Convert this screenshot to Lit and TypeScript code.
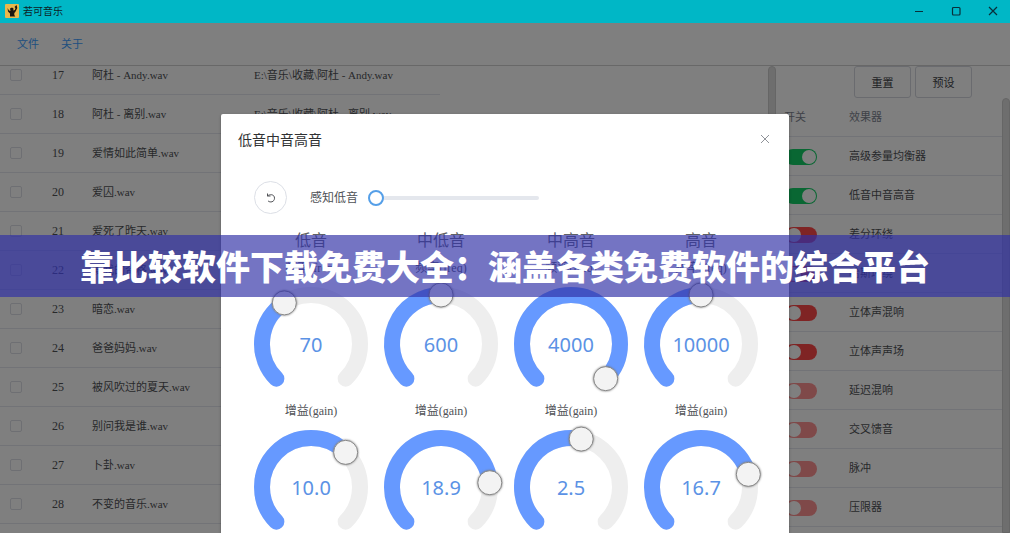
import { LitElement, html, svg, css } from "lit";
import { customElement, property } from "lit/decorators.js";

const PATH_ROOT = "E:\\音乐\\收藏\\";

const songs: { no: number; name: string }[] = [
  { no: 17, name: "阿杜 - Andy.wav" },
  { no: 18, name: "阿杜 - 离别.wav" },
  { no: 19, name: "爱情如此简单.wav" },
  { no: 20, name: "爱囚.wav" },
  { no: 21, name: "爱死了昨天.wav" },
  { no: 22, name: "爱我的资格.wav" },
  { no: 23, name: "暗恋.wav" },
  { no: 24, name: "爸爸妈妈.wav" },
  { no: 25, name: "被风吹过的夏天.wav" },
  { no: 26, name: "别问我是谁.wav" },
  { no: 27, name: "卜卦.wav" },
  { no: 28, name: "不变的音乐.wav" },
];

const effects: { name: string; state: string }[] = [
  { name: "高级参量均衡器", state: "on" },
  { name: "低音中音高音", state: "on" },
  { name: "差分环绕", state: "off" },
  { name: "哈斯环绕", state: "off" },
  { name: "立体声混响", state: "off" },
  { name: "立体声声场", state: "off" },
  { name: "延迟混响", state: "locked" },
  { name: "交叉馈音", state: "locked" },
  { name: "脉冲", state: "locked" },
  { name: "压限器", state: "locked" },
];

const bands = [
  { title: "低音", freq: "70", freqAt: 102, gain: "10.0", gainAt: 180 },
  { title: "中低音", freq: "600", freqAt: 135, gain: "18.9", gainAt: 220 },
  { title: "中高音", freq: "4000", freqAt: 270, gain: "2.5", gainAt: 147 },
  { title: "高音", freq: "10000", freqAt: 135, gain: "16.7", gainAt: 210 },
];

@customElement("round-knob")
export class RoundKnob extends LitElement {
  @property() value = "";
  @property() label = "";
  @property({ type: Number }) angle = 0;

  static styles = css`
    :host { display: block; }
    .knob { display: block; overflow: visible; }
    .track { fill: none; stroke: #eee; stroke-width: 16; stroke-linecap: round; }
    .fill { fill: none; stroke: #69f; stroke-width: 16; stroke-linecap: round; }
    .handle { fill: #f3f3f3; stroke: #888; stroke-width: 1; filter: drop-shadow(0 0 1px #777); }
    .value { fill: #5b92e5; font: 20px "Noto Sans", sans-serif; text-anchor: middle; }
  `;

  private point(deg: number) {
    const a = ((135 + deg) * Math.PI) / 180;
    return [57 + 49 * Math.cos(a), 57 + 49 * Math.sin(a)];
  }

  private arc(deg: number) {
    const [x0, y0] = this.point(0);
    const [x1, y1] = this.point(deg);
    return `M${x0} ${y0}A49 49 0 ${deg > 180 ? 1 : 0} 1 ${x1} ${y1}`;
  }

  render() {
    const [x, y] = this.point(this.angle);
    return html`<svg class="knob" width="114" height="104" role="slider" aria-label=${this.label} aria-valuenow=${this.value}>
      ${svg`<path class="track" d=${this.arc(270)}></path>
      <path class="fill" d=${this.arc(this.angle)}></path>
      <circle class="handle" cx=${x} cy=${y} r="12"></circle>
      <text class="value" x="57" y="65">${this.value}</text>`}
    </svg>`;
  }
}

@customElement("app-root")
export class AppRoot extends LitElement {
  static styles = css`
    :host {
      display: block;
      position: relative;
      height: 100vh;
      overflow: hidden;
      background: #fff;
      color: #505256;
      font: 12px/20px "Liberation Serif", "Noto Sans CJK SC", serif;
    }
    * { box-sizing: border-box; }
    .window { display: flex; flex-direction: column; height: 100%; }
    .titlebar {
      display: flex; align-items: center; gap: 4px; flex: none; height: 23px; padding: 0 12px 2px 5px;
      background: #00b7c6; color: #0d2226; font: 10px/20px "Noto Sans CJK SC", sans-serif;
    }
    .logo { display: block; }
    .title { flex: 1; }
    .controls { display: flex; gap: 27px; }
    .control { display: block; padding: 0; border: 0; background: none; color: #08303a; }
    .control svg { display: block; }
    .body { position: relative; flex: 1; min-height: 0; display: flex; flex-direction: column; }
    .menu { display: flex; gap: 22px; flex: none; height: 43px; padding: 11px 17px 0; border-bottom: 1px solid #d0d0d0; }
    .menu-link { color: #409eff; text-decoration: none; font-size: 11px; }
    .panes { display: grid; grid-template-columns: minmax(0, 1fr) 234px; flex: 1; min-height: 0; }
    .list { display: flex; justify-content: space-between; overflow: hidden; }
    .scroll { flex: none; width: 8px; border-radius: 4px 4px 0 0; background: #dcdcdc; border: 1px solid #ccc; }
    .songs { align-self: flex-start; width: 440px; margin-top: -10px; border-collapse: separate; border-spacing: 0; table-layout: fixed; }
    .songs td { height: 39px; padding: 0; border-bottom: 1px solid #e4e7ee; white-space: nowrap; }
    .col-check { width: 52px; }
    .col-no { width: 40px; }
    .col-name { width: 162px; }
    .check {
      display: block; appearance: none; width: 12px; height: 12px; margin: 0 0 0 10px;
      border: 1px solid #dcdfe6; border-radius: 2px; background: #fff;
    }
    .cjk { font-size: 11px; }
    .side { display: flex; flex-direction: column; min-height: 0; overflow: hidden; }
    .actions { display: flex; gap: 4px; flex: none; padding-left: 78px; height: 32px; }
    .action {
      width: 57px; height: 32px; padding: 0; border: 1px solid #d4d7de; border-radius: 3px; background: #fff;
      color: #404246; font: 11px/20px "Noto Sans CJK SC", sans-serif;
    }
    .fx-wrap { display: flex; flex: 1; min-height: 0; }
    .fx { flex: 1; align-self: flex-start; border-collapse: separate; border-spacing: 0; table-layout: fixed; font-size: 11px; }
    .fx th, .fx td { height: 39px; padding: 0; border-bottom: 1px solid #e4e7ee; text-align: left; font-weight: 400; }
    .fx th { color: #808490; }
    .col-switch { width: 73px; }
    .fx .switch-head { padding-left: 8px; }
    .switch {
      display: block; appearance: none; position: relative; width: 32px; height: 16px; margin: 2px 0 0 9px;
      border-radius: 8px; background: #ff4949;
    }
    .switch::after {
      content: ""; position: absolute; top: 1px; left: 2px; width: 14px; height: 14px; border-radius: 7px; background: #fff;
    }
    .switch.on { background: #13ce66; }
    .switch.on::after { left: 17px; }
    .switch.locked { background: #ff9292; }
    .shade {
      position: absolute; inset: 0; display: flex; justify-content: center; align-items: flex-start;
      padding-top: 91px; background: rgba(0, 0, 0, 0.5);
    }
    .dialog {
      width: min(568px, 100%); padding: 15px 17px 40px; background: #fff; border-radius: 2px;
      box-shadow: 0 1px 3px rgba(0, 0, 0, 0.3);
    }
    .dialog-head { display: flex; justify-content: space-between; align-items: center; height: 20px; }
    .dialog-title { margin: 0; color: #303133; font: 14px/20px "Noto Sans CJK SC", sans-serif; }
    .close { padding: 0 2px 0 0; border: 0; background: none; color: #909399; }
    .close svg { display: block; }
    .bass { display: flex; align-items: center; height: 33px; margin-top: 32px; padding-left: 16px; }
    .undo {
      display: grid; place-items: center; width: 33px; height: 33px; padding: 0; border: 1px solid #dcdfe6;
      border-radius: 17px; background: #fff; color: #505256;
    }
    .bass-label { margin-left: 23px; font-size: 12px; }
    .bass-slider { appearance: none; width: 171px; height: 18px; margin: 0 0 0 10px; background: none; }
    .bass-slider::-webkit-slider-runnable-track { height: 4px; margin-left: 8px; border-radius: 2px; background: #e4e7ed; }
    .bass-slider::-webkit-slider-thumb {
      appearance: none; width: 16px; height: 16px; margin: -6px 0 0 -8px; border: 2px solid #559fe8; border-radius: 8px; background: #fff;
    }
    .bands { display: grid; grid-template-columns: repeat(4, 114px); column-gap: 16px; padding: 13px 0 0 16px; }
    .band { display: flex; flex-direction: column; text-align: center; }
    .band-title { margin: 0; color: #606266; font: 400 16px/24px "Noto Sans CJK SC", sans-serif; }
    .band-label { height: 20px; margin-bottom: 9px; }
    .band-label.freq { margin-top: 7px; }
    .band-label.gain { margin-top: 10px; }
    .banner {
      position: absolute; top: 235px; left: 0; right: 0; height: 62px; display: flex; justify-content: center; align-items: center;
      margin: 0; background: rgba(47, 47, 165, 0.67); color: #fff; white-space: nowrap;
      font: 900 34px/60px "Noto Sans CJK SC", sans-serif;
    }
  `;

  render() {
    return html`
      <div class="window">
        <header class="titlebar">
          <svg class="logo" width="14" height="14" viewBox="0 0 14 14">
            <rect width="14" height="14" rx="1" fill="#e9b84c"></rect>
            <path d="M2.500 4l1.500 2.500 1.500.5L5 4.500 7 3.500l1.500 1L8.300 6.500l1.500-.5.700-2L9.500 3 11.500 1l.8 3-2 4-1 1v2l1 1.500H5V9.500L3 7.500z" fill="#1d1710"></path>
          </svg>
          <span class="title">若可音乐</span>
          <div class="controls">
            <button class="control" aria-label="最小化"><svg width="10" height="10"><path d="M1 5.500h8" stroke="currentColor"></path></svg></button>
            <button class="control" aria-label="最大化"><svg width="10" height="10"><rect x="1.500" y="1.500" width="7.500" height="7.500" rx="1" fill="none" stroke="currentColor" stroke-width="1.200"></rect></svg></button>
            <button class="control" aria-label="关闭"><svg width="10" height="10"><path d="M1 1l8 8M9 1l-8 8" stroke="currentColor" stroke-width="1.200"></path></svg></button>
          </div>
        </header>
        <div class="body">
          <nav class="menu"><a class="menu-link" href="#file">文件</a><a class="menu-link" href="#about">关于</a></nav>
          <main class="panes">
            <section class="list">
              <table class="songs">
                <colgroup><col class="col-check" /><col class="col-no" /><col class="col-name" /><col /></colgroup>
                <tbody>
                  ${songs.map((s) => html`<tr>
                    <td><input class="check" type="checkbox" aria-label=${s.name} /></td>
                    <td>${s.no}</td>
                    <td class="cjk">${s.name}</td>
                    <td class="cjk">${PATH_ROOT}${s.name}</td>
                  </tr>`)}
                </tbody>
              </table>
              <div class="scroll"></div>
            </section>
            <aside class="side">
              <div class="actions"><button class="action">重置</button><button class="action">预设</button></div>
              <div class="fx-wrap">
                <table class="fx">
                  <colgroup><col class="col-switch" /><col /></colgroup>
                  <thead><tr><th class="switch-head">开关</th><th>效果器</th></tr></thead>
                  <tbody>
                    ${effects.map((e) => html`<tr>
                      <td><input class="switch ${e.state}" type="checkbox" role="switch" aria-label=${e.name}
                        .checked=${e.state === "on"} ?disabled=${e.state === "locked"} /></td>
                      <td>${e.name}</td>
                    </tr>`)}
                  </tbody>
                </table>
                <div class="scroll"></div>
              </div>
            </aside>
          </main>
          <div class="shade">
            <section class="dialog" role="dialog" aria-labelledby="dialog-title">
              <div class="dialog-head">
                <h2 class="dialog-title" id="dialog-title">低音中音高音</h2>
                <button class="close" aria-label="关闭"><svg width="10" height="10"><path d="M1 1l8 8M9 1l-8 8" stroke="currentColor"></path></svg></button>
              </div>
              <div class="bass">
                <button class="undo" aria-label="还原"><svg width="12" height="12" viewBox="0 0 12 12" fill="none" stroke="currentColor"><path d="M2.500 1.500v2.500h3M2.500 4C4.500 2 9.500 2 9.500 6.200C9.500 10 5 11 3 8.800"></path></svg></button>
                <label class="bass-label" for="bass">感知低音</label>
                <input class="bass-slider" id="bass" type="range" min="0" max="100" value="0" />
              </div>
              <div class="bands">
                ${bands.map((b) => html`<div class="band">
                  <h3 class="band-title">${b.title}</h3>
                  <div class="band-label freq">频率(freq)</div>
                  <round-knob .value=${b.freq} .angle=${b.freqAt} .label=${b.title + " freq"}></round-knob>
                  <div class="band-label gain">增益(gain)</div>
                  <round-knob .value=${b.gain} .angle=${b.gainAt} .label=${b.title + " gain"}></round-knob>
                </div>`)}
              </div>
            </section>
          </div>
        </div>
      </div>
      <h1 class="banner">靠比较软件下载免费大全：涵盖各类免费软件的综合平台</h1>
    `;
  }
}
